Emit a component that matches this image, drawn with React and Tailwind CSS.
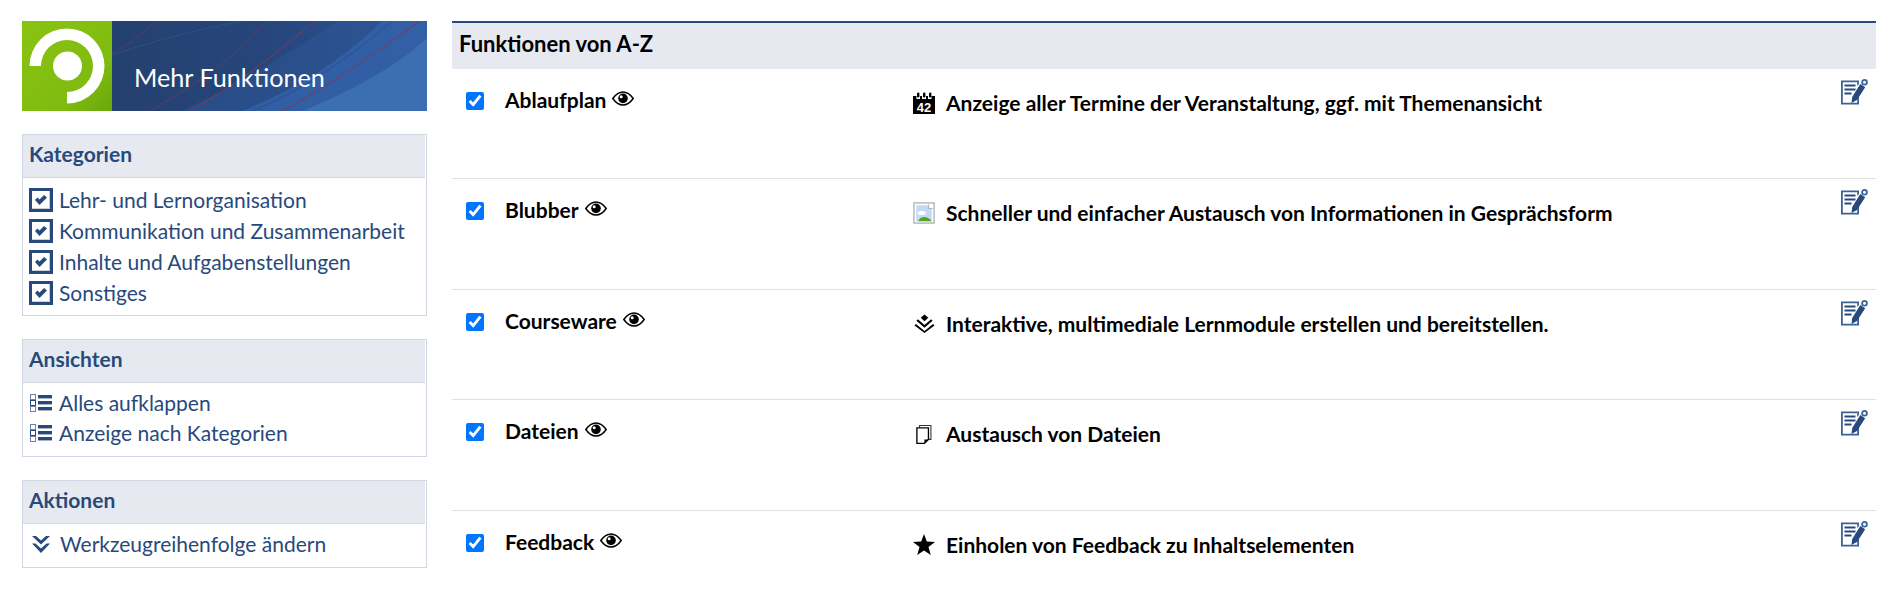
import React from "react";

function StudipLogo() {
  return (
    <svg viewBox="0 0 90 90" className="w-[90px] h-[90px] shrink-0">
      <defs>
        <linearGradient id="lg" x1="0" y1="0" x2="1" y2="1">
          <stop offset="0" stopColor="#89c312" />
          <stop offset="0.7" stopColor="#7fbb10" />
          <stop offset="1" stopColor="#69a70c" />
        </linearGradient>
      </defs>
      <rect width="90" height="90" fill="url(#lg)" />
      <path d="M7.5 45 A37.5 37.5 0 1 1 45 82.5 L45 71 A26 26 0 1 0 19 45 Z" fill="#fff" />
      <circle cx="45.5" cy="45" r="14.5" fill="#fff" />
    </svg>
  );
}

function BannerLines() {
  return (
    <svg viewBox="0 0 315 90" preserveAspectRatio="none" className="absolute inset-0 w-full h-full">
      <path d="M70 90 C130 62 180 30 225 0 L315 0 L315 90 Z" fill="#2d5596" opacity="0.55" />
      <path d="M130 90 C190 66 235 35 270 0 L315 0 L315 90 Z" fill="#3462aa" opacity="0.8" />
      <path d="M190 90 C240 70 285 45 315 17 L315 90 Z" fill="#3f72b6" opacity="0.8" />
      <path d="M0 32 C20 22 30 12 45 0" stroke="#7a3a5e" strokeWidth="0.8" fill="none" opacity="0.7" />
      <path d="M0 34 C60 14 100 6 130 0" stroke="#2f5a95" strokeWidth="1" fill="none" opacity="0.6" />
      <path d="M38 90 C90 60 130 30 155 0" stroke="#7a3a5e" strokeWidth="0.8" fill="none" opacity="0.8" />
      <path d="M78 90 C130 60 170 28 202 0" stroke="#87345a" strokeWidth="1" fill="none" />
      <path d="M140 90 C190 70 240 35 280 0" stroke="#2a4f8f" strokeWidth="1" fill="none" />
      <path d="M170 90 C225 60 265 30 308 0" stroke="#87345a" strokeWidth="1" fill="none" />
    </svg>
  );
}

function CheckBoxIcon() {
  return (
    <span className="w-6 h-6 shrink-0 border-[3px] border-[#28497c] bg-white flex items-center justify-center">
      <span className="w-[18px] h-[18px] border-r border-b border-[#c9cfdd] flex items-center justify-center">
        <svg viewBox="0 0 12 10" className="w-[12px] h-[10px]">
          <path d="M0 5 L2.4 2.4 L4.5 4.4 L9 0 L12 2.6 L4.5 10 Z" fill="#28497c" />
        </svg>
      </span>
    </span>
  );
}

function ListIcon() {
  return (
    <svg viewBox="0 0 22 18" className="w-[22px] h-[18px] shrink-0">
      <rect x="0.5" y="0.5" width="5" height="5" fill="#fff" stroke="#6d84a8" />
      <rect x="0.5" y="6.5" width="5" height="5" fill="#fff" stroke="#28497c" />
      <rect x="0.5" y="12.5" width="5" height="5" fill="#fff" stroke="#6d84a8" />
      <rect x="8" y="1" width="14" height="3.4" fill="#28497c" />
      <rect x="8" y="7" width="14" height="3.4" fill="#28497c" />
      <rect x="8" y="13" width="14" height="3.4" fill="#28497c" />
    </svg>
  );
}

function DoubleDown() {
  return (
    <svg viewBox="0 0 18 17" className="w-[18px] h-[17px] shrink-0">
      <path d="M0 0 H4 L9 4.5 L14 0 H18 L9 8.5 Z" fill="#28497c" />
      <path d="M0 7.5 H3.5 L9 12.5 L14.5 7.5 H18 L9 17 Z" fill="#28497c" />
    </svg>
  );
}

function EyeIcon() {
  return (
    <svg viewBox="0 0 22 15" className="w-[22px] h-[15px]">
      <path d="M0.8 7.5 C4 3 7.5 1 11 1 C14.5 1 18 3 21.2 7.5 C18 12 14.5 14 11 14 C7.5 14 4 12 0.8 7.5 Z" fill="none" stroke="#000" strokeWidth="1.5" />
      <circle cx="11" cy="7.4" r="4.8" fill="#000" />
      <circle cx="9.2" cy="5.8" r="1.5" fill="#fff" />
    </svg>
  );
}

function EditIcon() {
  return (
    <svg viewBox="0 0 28 26" className="w-7 h-[26px]">
      <path d="M1 1.5 H19 V5 L17.2 7 V3.3 H2.8 V23.7 H17.2 V17.5 L19 15 V25.5 H1 Z" fill="#3b6398" />
      <rect x="4.5" y="5.5" width="11" height="2" fill="#28497c" />
      <rect x="4.5" y="9.5" width="11" height="2" fill="#28497c" />
      <rect x="4.5" y="13.5" width="7" height="2" fill="#28497c" />
      <path d="M11.5 24 L12.2 18 L20.3 5 L25.2 8.2 L17 21 Z" fill="#28497c" />
      <circle cx="24.5" cy="3.3" r="2.4" fill="none" stroke="#3b6398" strokeWidth="1.8" />
    </svg>
  );
}

function CalendarIcon() {
  return (
    <svg viewBox="0 0 22 22" className="w-[22px] h-[22px]">
      <path d="M0 4 H3.5 V7 H7 V4 H9 V7 H13 V4 H15 V7 H18.5 V4 H22 V22 H0 Z" fill="#000" />
      <rect x="4" y="0.5" width="2.4" height="5" rx="1.2" fill="#000" />
      <rect x="10" y="0.5" width="2.4" height="5" rx="1.2" fill="#000" />
      <rect x="16" y="0.5" width="2.4" height="5" rx="1.2" fill="#000" />
      <text x="11" y="20" textAnchor="middle" fontFamily="'Liberation Sans', sans-serif" fontWeight="700" fontSize="13" fill="#fff">42</text>
    </svg>
  );
}

function BlubberIcon() {
  return (
    <svg viewBox="0 0 24 24" className="w-6 h-6">
      <rect x="1" y="1" width="22" height="22" fill="#fff" stroke="#b8b8b8" strokeWidth="1.6" />
      <path d="M3.5 3.5 H17 L20.5 7 V21 H3.5 Z" fill="#c4d9f5" />
      <path d="M17 2.5 V7 H21.5" fill="#fff" stroke="#aaaaaa" />
      <ellipse cx="9.5" cy="12" rx="4.5" ry="2.2" fill="#fff" />
      <path d="M5.5 21 C8 15.5 15 14.5 20.5 21 Z" fill="#4fa32f" />
    </svg>
  );
}

function CoursewareIcon() {
  return (
    <svg viewBox="0 0 22 20" className="w-[21px] h-[19px]">
      <path d="M11 0.5 L15 4 L11 7.5 L7 4 Z" fill="#000" />
      <path d="M4 5.5 L11 11.5 L18 5.5 L19.5 7 L11 14.5 L2.5 7 Z" fill="#000" />
      <path d="M2 10.5 L11 18 L20 10.5 L21.5 12 L11 20 L0.5 12 Z" fill="#000" />
    </svg>
  );
}

function FilesIcon() {
  return (
    <svg viewBox="0 0 18 22" className="w-[16px] h-[21px]">
      <path d="M4 3 V0.8 H16.8 V16.5 H14.5" fill="none" stroke="#333" strokeWidth="1.2" />
      <path d="M1 3.5 H14 V16.5 L9.5 21 H1 Z" fill="#fff" stroke="#000" strokeWidth="1.5" />
      <path d="M9.5 21 V16.5 H14 Z" fill="#000" />
    </svg>
  );
}

function StarIcon() {
  return (
    <svg viewBox="0 0 22 21" className="w-[22px] h-[21px]">
      <path d="M11 0 L13.8 7.6 L22 7.9 L15.5 12.9 L17.8 21 L11 16.4 L4.2 21 L6.5 12.9 L0 7.9 L8.2 7.6 Z" fill="#000" />
    </svg>
  );
}

function SideBox({ title, className, children }) {
  return (
    <div className={"border border-[#d0d7e3] " + (className || "")}>
      <div className="h-[43px] mr-[1px] bg-[#e7e9f1] border-b border-[#d0d7e3] pl-[6px] pb-[5px] flex items-center text-[21px] font-bold text-[#28497c]">
        {title}
      </div>
      {children}
    </div>
  );
}

const categories = [
  "Lehr- und Lernorganisation",
  "Kommunikation und Zusammenarbeit",
  "Inhalte und Aufgabenstellungen",
  "Sonstiges",
];

const tools = [
  { name: "Ablaufplan", desc: "Anzeige aller Termine der Veranstaltung, ggf. mit Themenansicht", icon: <CalendarIcon /> },
  { name: "Blubber", desc: "Schneller und einfacher Austausch von Informationen in Gesprächsform", icon: <BlubberIcon /> },
  { name: "Courseware", desc: "Interaktive, multimediale Lernmodule erstellen und bereitstellen.", icon: <CoursewareIcon /> },
  { name: "Dateien", desc: "Austausch von Dateien", icon: <FilesIcon /> },
  { name: "Feedback", desc: "Einholen von Feedback zu Inhaltselementen", icon: <StarIcon /> },
];

function ToolRow({ tool, last }) {
  return (
    <div className={"h-[110.5px] flex items-start " + (last ? "" : "border-b border-[#e0e0e0]")}>
      <div className="w-[53px] pl-[14px] pt-[23px] shrink-0 flex">
        <input type="checkbox" defaultChecked className="w-[18px] h-[18px] m-0 accent-[#0075ff]" />
      </div>
      <div className="w-[408px] shrink-0 pt-[19px] flex items-start text-[21px] font-bold text-black">
        <span className="leading-[24px]">{tool.name}</span>
        <span className="ml-[6px] mt-[3px]"><EyeIcon /></span>
      </div>
      <div className="flex-1 flex items-center pt-[22px] text-[21px] font-bold text-black">
        <span className="w-[33px] shrink-0 flex justify-center pr-[11px]">{tool.icon}</span>
        <span className="leading-[24px]">{tool.desc}</span>
      </div>
      <div className="w-[36px] shrink-0 pt-[10px]">
        <EditIcon />
      </div>
    </div>
  );
}

export default function App() {
  return (
    <div className="w-[1891px] h-[603px] overflow-hidden bg-white flex gap-[25px] pl-[22px] pt-[21px] font-['Lato',sans-serif]">
      {/* SIDEBAR */}
      <div className="w-[405px] shrink-0">
        <div className="h-[90px] flex mb-[23px]">
          <StudipLogo />
          <div className="relative flex-1 bg-gradient-to-r from-[#24406e] via-[#26467c] to-[#2d5596] overflow-hidden flex items-end">
            <BannerLines />
            <span className="relative pl-[22px] pb-[19px] text-[25.2px] leading-[30px] text-white">Mehr Funktionen</span>
          </div>
        </div>

        <SideBox title="Kategorien" className="mb-[23px]">
          <div className="px-[6px] py-[10px] flex flex-col gap-[7px] text-[21px] text-[#28497c]">
            {categories.map((c) => (
              <div key={c} className="flex items-center gap-[6px] h-6 leading-[23px]">
                <CheckBoxIcon />
                <span className="-mt-[1px]">{c}</span>
              </div>
            ))}
          </div>
        </SideBox>

        <SideBox title="Ansichten" className="mb-[23px]">
          <div className="pl-[7px] pr-[5px] pt-[5px] pb-[8px] flex flex-col text-[21px] text-[#28497c]">
            {["Alles aufklappen", "Anzeige nach Kategorien"].map((c) => (
              <div key={c} className="flex items-center gap-[7px] h-[30px]">
                <ListIcon />
                <span>{c}</span>
              </div>
            ))}
          </div>
        </SideBox>

        <SideBox title="Aktionen">
          <div className="h-[43px] pl-[9px] pb-[3px] flex items-center gap-[10px] text-[21px] text-[#28497c]">
            <DoubleDown />
            <span>Werkzeugreihenfolge ändern</span>
          </div>
        </SideBox>
      </div>

      {/* MAIN */}
      <div className="w-[1424px] shrink-0">
        <div className="h-[47.5px] border-t-[2px] border-[#28497c] bg-[#e7e9f1] px-[7px] pb-[4px] flex items-center text-[22px] font-bold text-black">
          Funktionen von A-Z
        </div>
        {tools.map((t, i) => (
          <ToolRow key={t.name} tool={t} last={i === tools.length - 1} />
        ))}
      </div>
    </div>
  );
}
